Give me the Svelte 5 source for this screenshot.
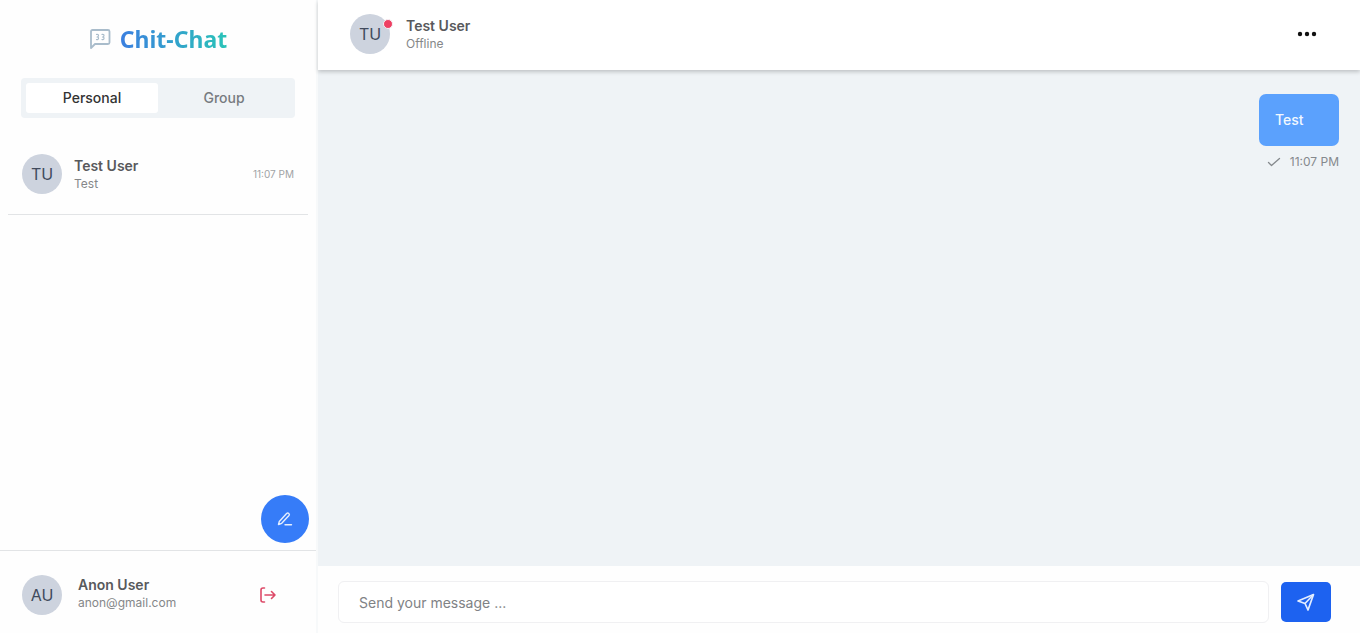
<script>
  let tab = $state('personal');
  let draft = $state('');

  const chats = [
    { id: 1, initials: 'TU', name: 'Test User', last: 'Test', time: '11:07 PM' },
  ];

  const messages = [
    { id: 1, text: 'Test', time: '11:07 PM' },
  ];

  const me = { initials: 'AU', name: 'Anon User', email: 'anon@gmail.com' };

  function send(e) {
    e.preventDefault();
    draft = '';
  }
</script>

<div class="app">
  <aside class="sidebar">
    <h1 class="brand">
      <svg width="22" height="22" viewBox="0 0 22 22" fill="none" stroke="#a9bccb" stroke-width="1.800" stroke-linejoin="round" aria-hidden="true">
        <path d="M2 20V3.500Q2 2 3.500 2H19Q20.500 2 20.500 3.500V14.500Q20.500 16 19 16H6z" />
        <path d="M7 6.500q2.500-.5 2.500 1T8 9q1.700 0 1.500 1.500T7 11.500M12.500 6.500q2.500-.5 2.500 1T13.500 9q1.700 0 1.500 1.500t-2.500 1" stroke-width="1.200" />
      </svg>
      <span>Chit-Chat</span>
    </h1>

    <div class="tabs" role="tablist">
      <button type="button" role="tab" aria-selected={tab === 'personal'} class:active={tab === 'personal'} onclick={() => (tab = 'personal')}>Personal</button>
      <button type="button" role="tab" aria-selected={tab === 'group'} class:active={tab === 'group'} onclick={() => (tab = 'group')}>Group</button>
    </div>

    <div class="chats">
      {#if tab === 'personal'}
        {#each chats as chat (chat.id)}
          <button type="button" class="chat">
            <span class="avatar">{chat.initials}</span>
            <span class="info">
              <span class="name">{chat.name}</span>
              <span class="sub">{chat.last}</span>
            </span>
            <span class="time">{chat.time}</span>
          </button>
        {/each}
      {/if}
    </div>

    <button type="button" class="compose" aria-label="New chat">
      <svg width="16" height="16" viewBox="0 0 16 16" fill="none" stroke="currentColor" stroke-width="1.400" stroke-linecap="round" stroke-linejoin="round">
        <path d="M1.500 13.500l.8-3L9.600 2.600q1.100-1 2.200-.1t.2 2L4.700 12.300z" />
        <path d="M8 13.700h6.500" />
      </svg>
    </button>

    <div class="account">
      <span class="avatar">{me.initials}</span>
      <span class="info">
        <span class="name">{me.name}</span>
        <span class="sub">{me.email}</span>
      </span>
      <button type="button" class="logout" aria-label="Log out">
        <svg width="18" height="18" viewBox="0 0 18 18" fill="none" stroke="currentColor" stroke-width="1.600" stroke-linecap="round" stroke-linejoin="round">
          <path d="M5.500 2H4Q2 2 2 4v10q0 2 2 2h1.500" />
          <path d="M6 9h10M12.500 5.500L16 9l-3.500 3.500" />
        </svg>
      </button>
    </div>
  </aside>

  <main class="room">
    <header>
      <span class="avatar">TU<i class="status"></i></span>
      <span class="info">
        <span class="name">Test User</span>
        <span class="sub">Offline</span>
      </span>
      <button type="button" class="more" aria-label="More options">
        <svg width="20" height="6" viewBox="0 0 20 6" fill="currentColor">
          <circle cx="3" cy="3" r="2.200" />
          <circle cx="10" cy="3" r="2.200" />
          <circle cx="17" cy="3" r="2.200" />
        </svg>
      </button>
    </header>

    <div class="messages">
      {#each messages as message (message.id)}
        <div class="message">
          <p>{message.text}</p>
          <small>
            <svg width="14" height="10" viewBox="0 0 14 10" fill="none" stroke="currentColor" stroke-width="1.300" stroke-linecap="round" stroke-linejoin="round" aria-label="Sent">
              <path d="M1.500 5.500L4.500 8.500L12.500 1.500" />
            </svg>
            {message.time}
          </small>
        </div>
      {/each}
    </div>

    <form class="composer" onsubmit={send}>
      <input type="text" placeholder="Send your message ..." aria-label="Message" bind:value={draft} />
      <button type="submit" aria-label="Send">
        <svg width="20" height="20" viewBox="0 0 20 20" fill="none" stroke="currentColor" stroke-width="1.700" stroke-linejoin="round">
          <path d="M17.500 2.500L2 9l7 2.500L12 18z" />
          <path d="M17.500 2.500L9 11.500" />
        </svg>
      </button>
    </form>
  </main>
</div>

<style>
  :global(body) {
    margin: 0;
    background: #f7f9fa;
    font-family: Inter, sans-serif;
  }

  .app {
    display: flex;
    height: 100vh;
    gap: 2px;
  }

  button,
  input {
    font-family: inherit;
    border: 0;
    padding: 0;
    margin: 0;
    background: none;
  }

  button {
    cursor: pointer;
  }

  svg {
    display: block;
    flex-shrink: 0;
  }

  /* SIDEBAR */

  .sidebar {
    position: relative;
    display: flex;
    flex-direction: column;
    width: 316px;
    flex-shrink: 0;
    background: #fefefe;
  }

  .brand {
    display: flex;
    align-items: center;
    justify-content: center;
    gap: 9px;
    height: 78px;
    margin: 0;
    font: 700 23px/32px "Noto Sans", sans-serif;
  }

  .brand span {
    background: linear-gradient(to right, #3b7fe0, #2ac3b8);
    background-clip: text;
    -webkit-background-clip: text;
    color: transparent;
  }

  .tabs {
    display: flex;
    margin: 0 21px;
    padding: 5px;
    border-radius: 4px;
    background: #eff3f6;
  }

  .tabs button {
    flex: 1;
    height: 30px;
    padding-bottom: 1px;
    border-radius: 3px;
    font-size: 14px;
    font-weight: 500;
    color: #777b80;
  }

  .tabs button.active {
    background: #fff;
    color: #333;
  }

  .chats {
    flex: 1;
    padding: 16px 8px;
  }

  .chat {
    display: flex;
    align-items: center;
    width: 100%;
    padding: 20px 14px;
    border-bottom: 1px solid #e2e4e6;
    text-align: left;
  }

  .avatar {
    position: relative;
    display: flex;
    align-items: center;
    justify-content: center;
    width: 40px;
    height: 40px;
    flex-shrink: 0;
    border-radius: 50%;
    background: #cdd3de;
    color: #404a5c;
    font-size: 16px;
  }

  .info {
    display: flex;
    flex-direction: column;
    flex: 1;
    min-width: 0;
    margin-left: 12px;
  }

  .name {
    font-size: 14px;
    line-height: 18px;
    font-weight: 600;
    color: #58595c;
  }

  .sub {
    font-size: 12px;
    line-height: 18px;
    color: #858789;
  }

  .chat .info,
  header .info {
    padding-top: 1px;
  }

  .time {
    font-size: 10px;
    color: #a0a2a5;
  }

  .compose {
    position: absolute;
    right: 7px;
    bottom: 90px;
    display: flex;
    align-items: center;
    justify-content: center;
    width: 48px;
    height: 48px;
    border-radius: 50%;
    background: #367cf8;
    color: #e5effe;
  }

  .account {
    display: flex;
    align-items: center;
    height: 83px;
    padding: 5px 39px 0 22px;
    box-sizing: border-box;
    border-top: 1px solid #e2e4e6;
  }

  .account .info,
  .room .info {
    margin-left: 16px;
  }

  .account .info {
    padding-bottom: 2px;
  }

  .logout {
    color: #dd4a68;
  }

  /* ROOM */

  .room {
    display: flex;
    flex-direction: column;
    flex: 1;
    min-width: 0;
    background: #eff3f6;
  }

  header {
    position: relative;
    display: flex;
    align-items: center;
    height: 70px;
    padding: 0 43px 2px 32px;
    box-sizing: border-box;
    background: #fff;
    box-shadow: 0 2px 4px rgba(0, 0, 0, .2);
  }

  .status {
    position: absolute;
    top: 5px;
    right: -3px;
    width: 8px;
    height: 8px;
    border: 1px solid #f6f2f6;
    border-radius: 50%;
    background: #ee3f62;
  }

  .more {
    color: #111;
  }

  .messages {
    flex: 1;
    overflow-y: auto;
    padding: 24px 21px;
  }

  .message {
    display: flex;
    flex-direction: column;
    align-items: flex-end;
    gap: 8px;
  }

  .message p {
    min-width: 80px;
    margin: 0;
    padding: 16px;
    box-sizing: border-box;
    border-radius: 7px;
    background: #5ba1fd;
    color: #f2f8ff;
    font-size: 14px;
    line-height: 20px;
    font-weight: 500;
  }

  .message small {
    display: flex;
    align-items: center;
    gap: 9px;
    font-size: 12px;
    line-height: 16px;
    color: #85898d;
  }

  .composer {
    display: flex;
    align-items: center;
    gap: 12px;
    height: 67px;
    padding: 5px 29px 0 20px;
    box-sizing: border-box;
    background: #fefefe;
  }

  .composer input {
    flex: 1;
    min-width: 0;
    height: 42px;
    padding: 0 20px;
    box-sizing: border-box;
    border: 1px solid #f0f0f2;
    border-radius: 6px;
    background: #fff;
    color: #444;
    font-size: 14px;
  }

  .composer input::placeholder {
    color: #808285;
    opacity: 1;
  }

  .composer button {
    display: flex;
    align-items: center;
    justify-content: center;
    width: 50px;
    height: 40px;
    border-radius: 5px;
    background: #1d62f0;
    color: #e2edff;
  }
</style>
